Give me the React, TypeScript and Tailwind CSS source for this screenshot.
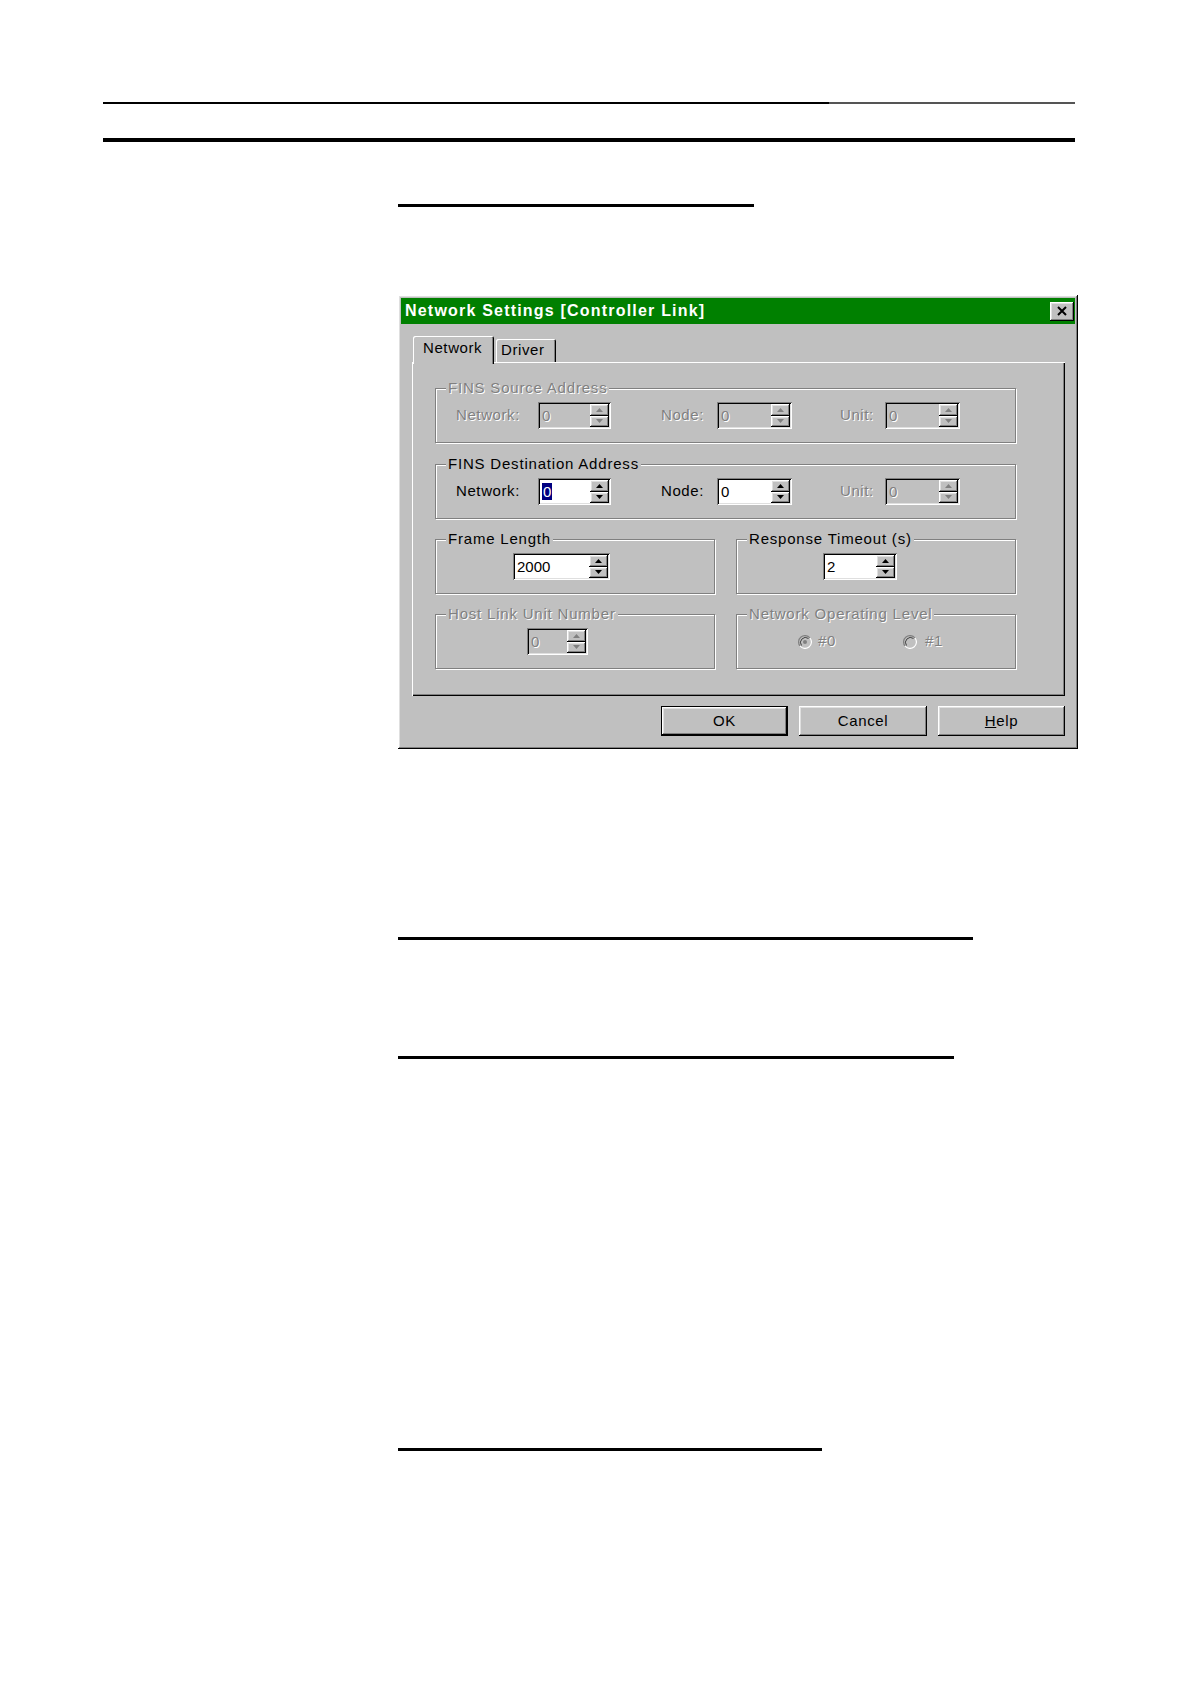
import React from "react";

const raised =
  "shadow-[inset_-1px_-1px_0_#000,inset_1px_1px_0_#fff,inset_-2px_-2px_0_#808080,inset_2px_2px_0_#dfdfdf]";
const sunken =
  "shadow-[inset_1px_1px_0_#808080,inset_-1px_-1px_0_#fff,inset_2px_2px_0_#000,inset_-2px_-2px_0_#dfdfdf]";
const dim = "text-[#808080] [text-shadow:1px_1px_0_#fff]";

function Arrow({ up, disabled }: { up?: boolean; disabled?: boolean }) {
  return (
    <svg width="7" height="4" viewBox="0 0 7 4" className="block">
      {up ? (
        <polygon points="3.5,0 7,4 0,4" fill={disabled ? "#808080" : "#000"} />
      ) : (
        <polygon points="0,0 7,0 3.5,4" fill={disabled ? "#808080" : "#000"} />
      )}
    </svg>
  );
}

function Spin({
  value,
  width,
  disabled,
  selected,
}: {
  value: string;
  width: string;
  disabled?: boolean;
  selected?: boolean;
}) {
  return (
    <div
      className={`flex h-[27px] p-[2px] ${width} ${sunken} ${
        disabled ? "bg-[#c0c0c0]" : "bg-white"
      }`}
    >
      <div
        className={`flex-1 pl-[2px] text-[15px] leading-[23px] tracking-normal ${
          disabled ? dim : "text-black"
        }`}
      >
        {selected ? (
          <span className="bg-[#000080] px-[1px] text-white">{value}</span>
        ) : (
          value
        )}
      </div>
      <div className="flex w-[19px] flex-col">
        <div className={`flex flex-1 items-center justify-center bg-[#c0c0c0] ${raised}`}>
          <Arrow up disabled={disabled} />
        </div>
        <div className={`flex flex-1 items-center justify-center bg-[#c0c0c0] ${raised}`}>
          <Arrow disabled={disabled} />
        </div>
      </div>
    </div>
  );
}

function Group({
  label,
  disabled,
  className,
  children,
}: {
  label: string;
  disabled?: boolean;
  className: string;
  children: React.ReactNode;
}) {
  return (
    <div
      className={`relative h-[55px] border border-[#808080] shadow-[inset_1px_1px_0_#fff,1px_1px_0_#fff] ${className}`}
    >
      <span
        className={`absolute -top-[10px] left-[10px] bg-[#c0c0c0] px-[2px] text-[15px] leading-[18px] tracking-[0.8px] ${
          disabled ? dim : "text-black"
        }`}
      >
        {label}
      </span>
      {children}
    </div>
  );
}

function Radio({ checked }: { checked?: boolean }) {
  return (
    <svg width="14" height="14" viewBox="0 0 14 14" className="block">
      <path d="M12 3 A6 6 0 0 0 2 11" stroke="#808080" strokeWidth="1.2" fill="none" />
      <path d="M2 11 A6 6 0 0 0 12 3" stroke="#fff" strokeWidth="1.2" fill="none" />
      <circle cx="7" cy="7" r="5" fill="#c0c0c0" />
      <path d="M10.5 3.5 A5 5 0 0 0 3.5 10.5" stroke="#404040" strokeWidth="1" fill="none" />
      {checked && <circle cx="7" cy="7" r="2" fill="#808080" />}
    </svg>
  );
}

function Button({
  children,
  width,
  isDefault,
}: {
  children: React.ReactNode;
  width: string;
  isDefault?: boolean;
}) {
  return (
    <div
      className={`flex h-[30px] items-center justify-center bg-[#c0c0c0] text-[15px] text-black ${width} ${
        isDefault ? "border border-black" : ""
      }`}
    >
      <div className={`flex h-full w-full items-center justify-center ${raised}`}>
        {children}
      </div>
    </div>
  );
}

function Dialog() {
  return (
    <div
      className={`h-[454px] w-[680px] bg-[#c0c0c0] p-[3px] font-['Liberation_Sans',Arial,sans-serif] tracking-[0.6px] ${raised}`}
    >
      {/* title bar */}
      <div className="flex h-[26px] items-center justify-between bg-[#008000] pl-[4px] pr-[1px]">
        <span className="text-[16px] font-bold tracking-[1.2px] text-white">
          Network Settings [Controller Link]
        </span>
        <div className={`flex h-[19px] w-[24px] items-center justify-center bg-[#c0c0c0] ${raised}`}>
          <svg width="10" height="10" viewBox="0 0 10 10">
            <path d="M1 1 L9 9 M9 1 L1 9" stroke="#000" strokeWidth="2" />
          </svg>
        </div>
      </div>

      <div className="pl-[11px] pr-[10px]">
        {/* tabs */}
        <div className="mt-[12px] flex h-[26px] items-end">
          <div className="relative z-10 -mb-[2px] ml-[1px] flex h-[28px] w-[81px] items-center rounded-t-[2px] bg-[#c0c0c0] pb-[4px] pl-[10px] text-[15px] text-black shadow-[inset_1px_1px_0_#fff,inset_-1px_0_0_#000,inset_-2px_0_0_#808080]">
            Network
          </div>
          <div className="ml-[2px] flex h-[23px] w-[60px] items-center rounded-t-[2px] pl-[5px] text-[15px] text-black shadow-[inset_1px_1px_0_#fff,inset_-1px_0_0_#000,inset_-2px_0_0_#808080]">
            Driver
          </div>
        </div>

        {/* tab panel */}
        <div className="h-[334px] pl-[23px] pt-[26px] shadow-[inset_1px_1px_0_#fff,inset_-1px_-1px_0_#000,inset_-2px_-2px_0_#808080]">
          <Group label="FINS Source Address" disabled className="w-[581px]">
            <div className={`flex h-full items-center pl-[20px] text-[15px] ${dim}`}>
              <span className="w-[82px]">Network:</span>
              <Spin value="0" width="w-[73px]" disabled />
              <span className="ml-[50px] w-[56px]">Node:</span>
              <Spin value="0" width="w-[75px]" disabled />
              <span className="ml-[48px] w-[45px]">Unit:</span>
              <Spin value="0" width="w-[75px]" disabled />
            </div>
          </Group>

          <Group label="FINS Destination Address" className="mt-[21px] w-[581px]">
            <div className="flex h-full items-center pl-[20px] text-[15px] text-black">
              <span className="w-[82px]">Network:</span>
              <Spin value="0" width="w-[73px]" selected />
              <span className="ml-[50px] w-[56px]">Node:</span>
              <Spin value="0" width="w-[75px]" />
              <span className={`ml-[48px] w-[45px] ${dim}`}>Unit:</span>
              <Spin value="0" width="w-[75px]" disabled />
            </div>
          </Group>

          <div className="mt-[20px] flex gap-[21px]">
            <Group label="Frame Length" className="w-[280px]">
              <div className="flex h-full items-center pl-[77px]">
                <Spin value="2000" width="w-[97px]" />
              </div>
            </Group>
            <Group label="Response Timeout (s)" className="w-[280px]">
              <div className="flex h-full items-center pl-[86px]">
                <Spin value="2" width="w-[74px]" />
              </div>
            </Group>
          </div>

          <div className="mt-[20px] flex gap-[21px]">
            <Group label="Host Link Unit Number" disabled className="w-[280px]">
              <div className="flex h-full items-center pl-[91px]">
                <Spin value="0" width="w-[61px]" disabled />
              </div>
            </Group>
            <Group label="Network Operating Level" disabled className="w-[280px]">
              <div className={`flex h-full items-center pl-[61px] text-[15px] ${dim}`}>
                <div className="flex w-[105px] items-center gap-[6px]">
                  <Radio checked />
                  <span>#0</span>
                </div>
                <div className="flex items-center gap-[8px]">
                  <Radio />
                  <span>#1</span>
                </div>
              </div>
            </Group>
          </div>
        </div>

        {/* buttons */}
        <div className="mt-[10px] flex justify-end gap-[11px]">
          <Button width="w-[127px]" isDefault>
            OK
          </Button>
          <Button width="w-[128px]">Cancel</Button>
          <Button width="w-[127px]">
            <span>
              <span className="underline">H</span>elp
            </span>
          </Button>
        </div>
      </div>
    </div>
  );
}

export default function App() {
  return (
    <main className="h-[1684px] w-[1190px] bg-white pt-[102px]">
      <div className="ml-[103px] w-[972px]">
        {/* page header rules */}
        <div className="flex h-[2px]">
          <div className="w-[726px] bg-black" />
          <div className="flex-1 bg-[#555555]" />
        </div>
        <div className="mt-[34px] h-[4px] bg-black" />

        <div className="ml-[295px]">
          <div className="mt-[62px] h-[3px] w-[356px] bg-black" />

          <div className="mt-[88px]">
            <Dialog />
          </div>

          <div className="mt-[188px] h-[3px] w-[575px] bg-black" />
          <div className="mt-[116px] h-[3px] w-[556px] bg-black" />
          <div className="mt-[389px] h-[3px] w-[424px] bg-black" />
        </div>
      </div>
    </main>
  );
}
